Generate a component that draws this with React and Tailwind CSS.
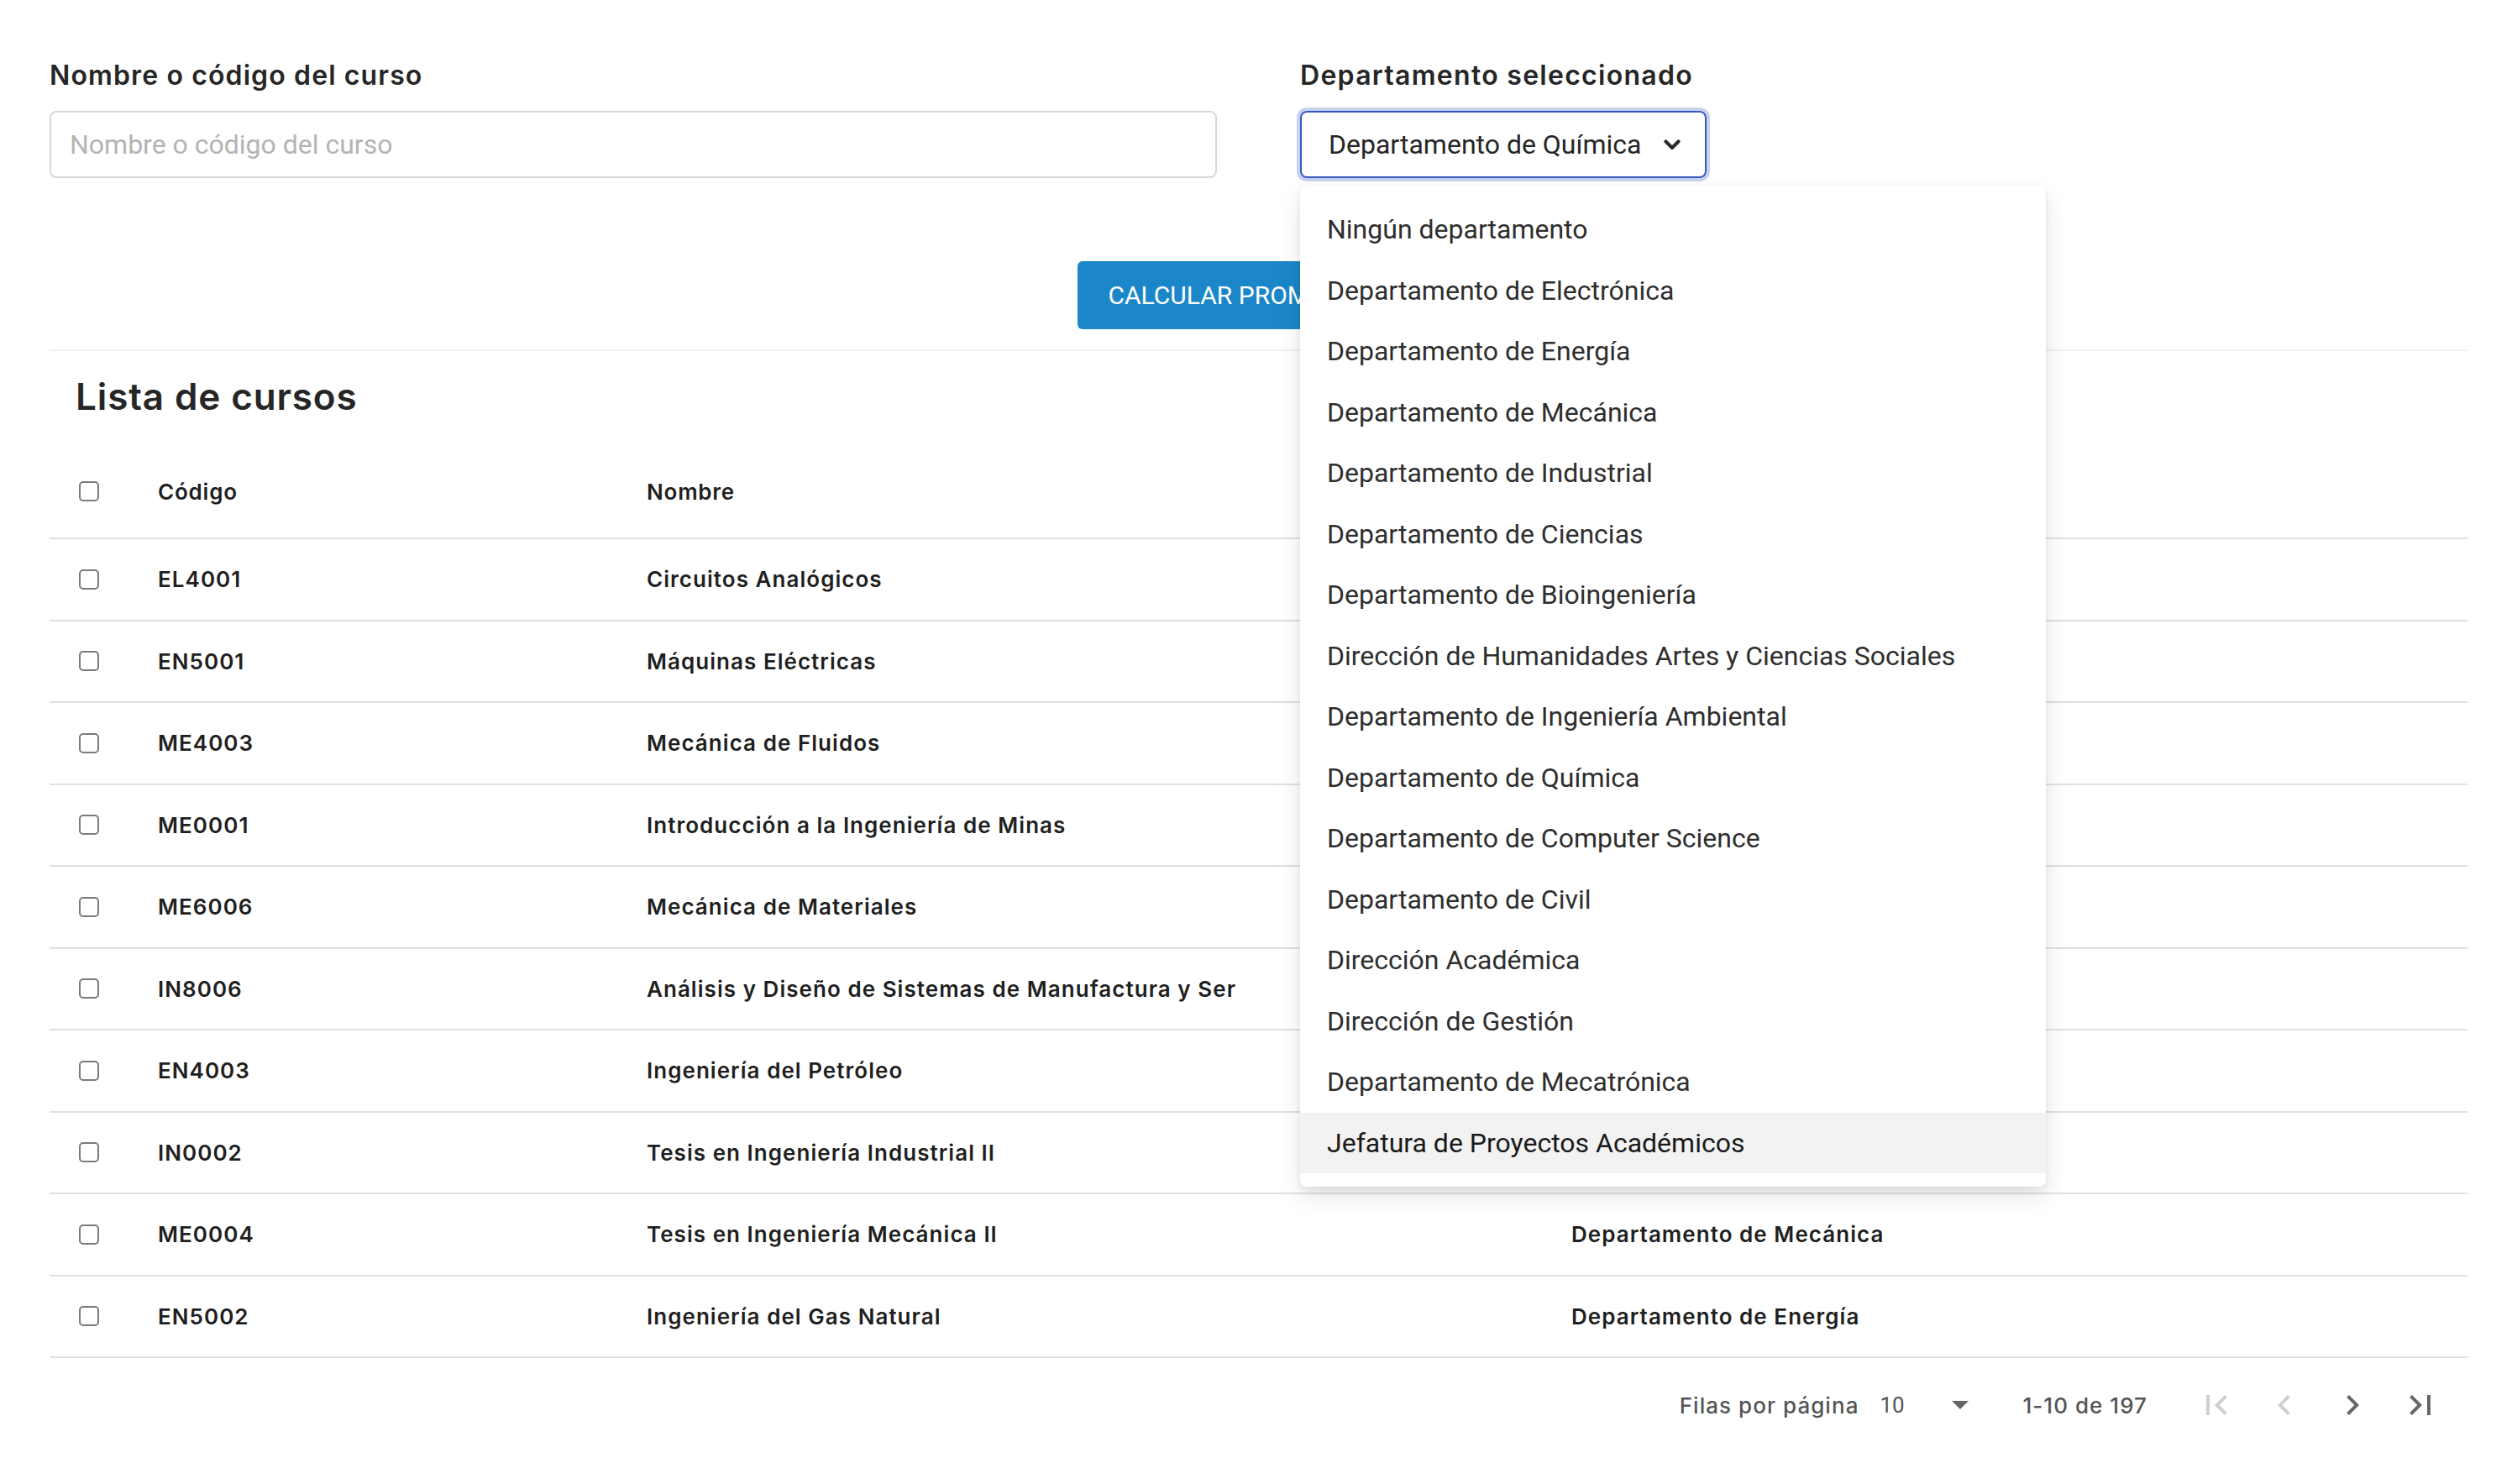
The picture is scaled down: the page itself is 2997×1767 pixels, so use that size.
import React from 'react';

const departments = [
  'Ningún departamento',
  'Departamento de Electrónica',
  'Departamento de Energía',
  'Departamento de Mecánica',
  'Departamento de Industrial',
  'Departamento de Ciencias',
  'Departamento de Bioingeniería',
  'Dirección de Humanidades Artes y Ciencias Sociales',
  'Departamento de Ingeniería Ambiental',
  'Departamento de Química',
  'Departamento de Computer Science',
  'Departamento de Civil',
  'Dirección Académica',
  'Dirección de Gestión',
  'Departamento de Mecatrónica',
  'Jefatura de Proyectos Académicos',
];

const courses = [
  ['EL4001', 'Circuitos Analógicos', 'Departamento de Electrónica'],
  ['EN5001', 'Máquinas Eléctricas', 'Departamento de Energía'],
  ['ME4003', 'Mecánica de Fluidos', 'Departamento de Mecánica'],
  ['ME0001', 'Introducción a la Ingeniería de Minas', 'Departamento de Mecánica'],
  ['ME6006', 'Mecánica de Materiales', 'Departamento de Mecánica'],
  ['IN8006', 'Análisis y Diseño de Sistemas de Manufactura y Ser', 'Departamento de Industrial'],
  ['EN4003', 'Ingeniería del Petróleo', 'Departamento de Energía'],
  ['IN0002', 'Tesis en Ingeniería Industrial II', 'Departamento de Industrial'],
  ['ME0004', 'Tesis en Ingeniería Mecánica II', 'Departamento de Mecánica'],
  ['EN5002', 'Ingeniería del Gas Natural', 'Departamento de Energía'],
];

const Checkbox = () => (
  <div className="ml-[35px] h-[24px] w-[24px] rounded-[5px] border-2 border-[#7a7a7a] bg-white" />
);

const PageIcon = ({ d, disabled }) => (
  <button className="flex h-[48px] w-[48px] items-center justify-center">
    <svg viewBox="0 0 24 24" className="h-[48px] w-[48px]" fill={disabled ? '#cfcfcf' : '#666666'}>
      <path d={d} />
    </svg>
  </button>
);

export default function App() {
  return (
    <div className="min-h-screen bg-white px-[59px] font-['Inter',sans-serif] text-[#222]">
      {/* filters */}
      <div className="grid grid-cols-2 gap-x-[99px] pt-[66px]">
        <div>
          <label className="block text-[32px] font-semibold leading-[48px] tracking-[0.035em] text-[#262626]">
            Nombre o código del curso
          </label>
          <input
            placeholder="Nombre o código del curso"
            className="mt-[18px] h-[80px] w-full rounded-[8px] border-2 border-[#d8d8d8] px-[22px] font-['Roboto',sans-serif] text-[32px] text-[#333] outline-none placeholder:text-[#b4b4b4]"
          />
        </div>
        <div className="relative">
          <label className="block text-[32px] font-semibold leading-[48px] tracking-[0.04em] text-[#262626]">
            Departamento seleccionado
          </label>
          <div className="mt-[18px] flex h-[80px] w-[484px] items-center justify-between rounded-[8px] border-2 border-[#3858c4] pl-[32px] pr-[29px] font-['Roboto',sans-serif] text-[32px] text-[#262626] ring-[4px] ring-[#c8d2ef]">
            <span>Departamento de Química</span>
            <svg width="20" height="13" viewBox="0 0 20 13">
              <path d="M2.5 2.5 L10 10 L17.5 2.5" fill="none" stroke="#2b2b2b" strokeWidth="4.2" strokeLinecap="round" strokeLinejoin="round" />
            </svg>
          </div>
          {/* open menu */}
          <ul className="absolute left-0 top-[155px] z-10 w-[888px] rounded-[8px] bg-white py-[16px] font-['Roboto',sans-serif] text-[32px] text-[#2e2e2e] shadow-[0_12px_30px_rgba(0,0,0,0.10),0_4px_10px_rgba(0,0,0,0.07)]">
            {departments.map((d, i) => (
              <li
                key={d}
                className={`flex h-[72.5px] items-center pl-[32px] ${i === departments.length - 1 ? 'bg-[#f2f2f2] text-[#1a1a1a]' : ''}`}
              >
                {d}
              </li>
            ))}
          </ul>
        </div>
      </div>

      <div className="mt-[99px] flex justify-center">
        <button className="flex h-[81px] w-[432px] items-center rounded-[6px] bg-[#1b87c8] pl-[37px] font-['Roboto',sans-serif] text-[30px] text-white">
          CALCULAR PROMEDIO
        </button>
      </div>

      <div className="mt-[24px] h-[2px] bg-[#eef2f7]" />

      {/* table */}
      <h2 className="mt-[26px] pl-[31px] text-[44px] font-semibold leading-[56px] tracking-[0.02em] text-[#262626]">Lista de cursos</h2>

      <div className="mt-[44px]">
        <div className="grid h-[98px] grid-cols-[129px_582px_1101px_1fr] items-center border-b-2 border-[#e0e0e0] pb-[14px] text-[26px] font-semibold tracking-[0.03em] text-[#1f1f1f]">
          <Checkbox />
          <span>Código</span>
          <span>Nombre</span>
          <span>Departamento</span>
        </div>
        {courses.map(([code, name, dept]) => (
          <div
            key={code}
            className="grid h-[97.5px] grid-cols-[129px_582px_1101px_1fr] items-center border-b-2 border-[#e0e0e0] text-[26px] font-semibold tracking-[0.04em] text-[#1f1f1f]"
          >
            <Checkbox />
            <span>{code}</span>
            <span className="whitespace-nowrap">{name}</span>
            <span>{dept}</span>
          </div>
        ))}

        {/* pagination */}
        <div className="flex h-[112px] items-center justify-end pr-[32px] text-[26px] font-medium tracking-[0.04em] text-[#555]">
          <span>Filas por página</span>
          <div className="ml-[25px] flex w-[106px] items-center justify-between">
            <span className="font-['Roboto',sans-serif] font-normal tracking-normal">10</span>
            <svg width="20" height="10" viewBox="0 0 20 10">
              <path d="M0 0 L20 0 L10 10 Z" fill="#666" />
            </svg>
          </div>
          <span className="ml-[64px]">1-10 de 197</span>
          <div className="ml-[58px] flex gap-[33px]">
            <PageIcon disabled d="M18.41 16.59L13.82 12l4.59-4.59L17 6l-6 6 6 6zM6 6h2v12H6z" />
            <PageIcon disabled d="M15.41 7.41L14 6l-6 6 6 6 1.41-1.41L10.83 12z" />
            <PageIcon d="M10 6L8.59 7.41 13.17 12l-4.58 4.59L10 18l6-6z" />
            <PageIcon d="M5.59 7.41L10.18 12l-4.59 4.59L7 18l6-6-6-6zM16 6h2v12h-2z" />
          </div>
        </div>
      </div>
    </div>
  );
}
